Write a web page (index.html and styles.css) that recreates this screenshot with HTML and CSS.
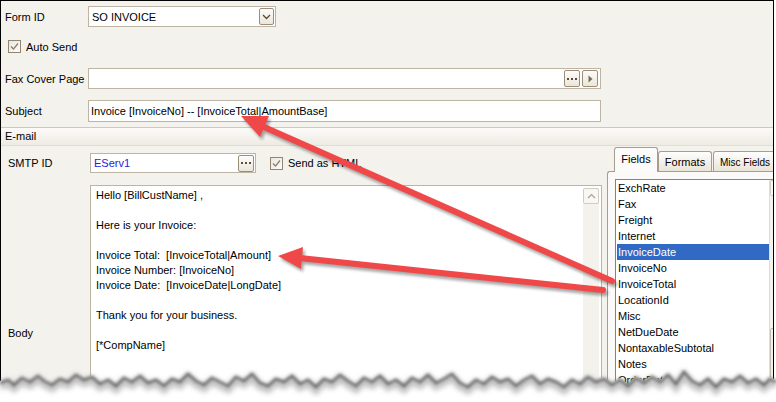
FILE: index.html
```html
<!DOCTYPE html>
<html lang="en">
<head>
    <meta charset="UTF-8">
    <meta name="viewport" content="width=device-width, initial-scale=1.0">
    <title>SO Invoice - E-mail</title>
    <link rel="stylesheet" href="styles.css">
</head>
<body>
    <div class="window">
        <div class="row row-form">
            <span class="label">Form ID</span>
            <div class="select">
                <span>SO INVOICE</span>
                <span class="btn btn-drop">
                    <svg width="9" height="6" viewBox="0 0 9 6"><path d="M1 1 L4.5 4.5 L8 1" fill="none" stroke="#5a4a36" stroke-width="1.3"/></svg>
                </span>
            </div>
        </div>
        <div class="row row-auto">
            <span class="check">
                <svg width="11" height="11" viewBox="0 0 11 11"><path d="M2 5.5 L4.5 8 L9 2.5" fill="none" stroke="#8a7e6c" stroke-width="1.2"/></svg>
            </span>
            <span>Auto Send</span>
        </div>
        <div class="row row-fax">
            <span class="label">Fax Cover Page</span>
            <div class="input wide">
                <span class="fill"></span>
                <span class="btn btn-dots"><i></i><i></i><i></i></span>
                <span class="btn btn-play">
                    <svg width="5" height="8" viewBox="0 0 5 8"><path d="M0.5 0.5 L4.5 4 L0.5 7.5 Z" fill="#7a6a55"/></svg>
                </span>
            </div>
        </div>
        <div class="row row-subject">
            <span class="label">Subject</span>
            <div class="input wide">Invoice [InvoiceNo] -- [InvoiceTotal|AmountBase]</div>
        </div>

        <div class="section-head">E-mail</div>

        <div class="email">
            <div class="email-main">
                <div class="row row-smtp">
                    <span class="label label-smtp">SMTP ID</span>
                    <div class="input smtp">
                        <span class="fill blue">EServ1</span>
                        <span class="btn btn-dots"><i></i><i></i><i></i></span>
                    </div>
                    <span class="check check-html">
                        <svg width="11" height="11" viewBox="0 0 11 11"><path d="M2 5.5 L4.5 8 L9 2.5" fill="none" stroke="#8a7e6c" stroke-width="1.2"/></svg>
                    </span>
                    <span>Send as HTML</span>
                </div>
                <div class="body-row">
                    <div class="label label-body">Body</div>
                    <div class="textarea">
                        <div class="text">
                            <p>Hello [BillCustName] ,</p>
                            <p></p>
                            <p>Here is your Invoice:</p>
                            <p></p>
                            <p>Invoice Total:  [InvoiceTotal|Amount]</p>
                            <p>Invoice Number: [InvoiceNo]</p>
                            <p>Invoice Date:  [InvoiceDate|LongDate]</p>
                            <p></p>
                            <p>Thank you for your business.</p>
                            <p></p>
                            <p>[*CompName]</p>
                        </div>
                        <div class="vscroll">
                            <span class="sbtn">
                                <svg width="9" height="6" viewBox="0 0 9 6"><path d="M1 5 L4.5 1.5 L8 5" fill="none" stroke="#a8a194" stroke-width="1.2"/></svg>
                            </span>
                        </div>
                    </div>
                </div>
            </div>

            <div class="side">
                <div class="tabs">
                    <span class="tab active">Fields</span>
                    <span class="tab t-formats">Formats</span>
                    <span class="tab t-misc">Misc Fields</span>
                </div>
                <div class="tab-panel">
                    <div class="listbox">
                        <ul class="fields">
                            <li>ExchRate</li>
                            <li>Fax</li>
                            <li>Freight</li>
                            <li>Internet</li>
                            <li class="selected">InvoiceDate</li>
                            <li>InvoiceNo</li>
                            <li>InvoiceTotal</li>
                            <li>LocationId</li>
                            <li>Misc</li>
                            <li>NetDueDate</li>
                            <li>NontaxableSubtotal</li>
                            <li>Notes</li>
                            <li>OrderDate</li>
                        </ul>
                        <div class="vscroll list-scroll">
                            <span class="sbtn"></span>
                            <span class="thumb"></span>
                        </div>
                    </div>
                </div>
            </div>
        </div>
    </div>

    <svg class="overlay" width="776" height="402" viewBox="0 0 776 402">
        <defs>
            <filter id="blur" x="-5%" y="-20%" width="110%" height="140%"><feGaussianBlur stdDeviation="1.6"/></filter>
            <filter id="soft" x="-5%" y="-50%" width="110%" height="200%"><feGaussianBlur stdDeviation="2.5"/></filter>
            <path id="edge" d="M0,381 L8,378 L14,383 L22,376 L30,380 L38,374 L44,379 L52,383 L60,377 L68,380 L76,373 L84,378 L92,375 L100,382 L108,378 L116,384 L124,376 L132,380 L140,374 L148,381 L156,378 L164,384 L172,377 L180,380 L188,372 L196,379 L204,383 L212,376 L220,380 L228,384 L236,375 L244,379 L252,372 L260,381 L268,384 L276,377 L284,380 L292,374 L300,382 L308,378 L316,385 L324,377 L332,380 L340,373 L348,379 L356,384 L364,376 L372,380 L380,374 L388,382 L396,378 L404,384 L412,376 L420,380 L428,373 L436,381 L444,377 L452,372 L460,381 L468,385 L476,378 L484,382 L492,375 L500,380 L508,377 L516,384 L524,378 L532,374 L540,382 L548,377 L556,380 L564,385 L572,378 L580,382 L588,375 L596,380 L604,377 L612,383 L620,378 L628,384 L636,376 L644,381 L652,375 L660,380 L668,373 L676,382 L684,370 L692,379 L700,383 L708,377 L716,385 L724,377 L732,380 L740,374 L748,381 L756,377 L764,383 L770,377 L776,380"/>
        </defs>
        <!-- arrow shadows -->
        <g transform="translate(2 3)" fill="#000" stroke="#000" opacity="0.35" filter="url(#blur)">
            <line x1="612" y1="281" x2="264" y2="127" stroke-width="6" stroke-linecap="round"/>
            <polygon points="241,116 260,137 269,116" stroke="none"/>
            <line x1="603" y1="290" x2="300" y2="258" stroke-width="6" stroke-linecap="round"/>
            <polygon points="278,256 301,269 303,247" stroke="none"/>
        </g>
        <!-- arrows -->
        <g fill="#f04848" stroke="#f04848">
            <line x1="612" y1="281" x2="264" y2="127" stroke-width="6" stroke-linecap="round"/>
            <polygon points="241,116 260,137 269,116" stroke="none"/>
            <line x1="603" y1="290" x2="300" y2="258" stroke-width="6" stroke-linecap="round"/>
            <polygon points="278,256 301,269 303,247" stroke="none"/>
        </g>
        <!-- torn bottom edge -->
        <rect x="0" y="372" width="776" height="30" fill="#fff" clip-path="url(#below)"/>
        <clipPath id="below">
            <path d="M0,381 L8,378 L14,383 L22,376 L30,380 L38,374 L44,379 L52,383 L60,377 L68,380 L76,373 L84,378 L92,375 L100,382 L108,378 L116,384 L124,376 L132,380 L140,374 L148,381 L156,378 L164,384 L172,377 L180,380 L188,372 L196,379 L204,383 L212,376 L220,380 L228,384 L236,375 L244,379 L252,372 L260,381 L268,384 L276,377 L284,380 L292,374 L300,382 L308,378 L316,385 L324,377 L332,380 L340,373 L348,379 L356,384 L364,376 L372,380 L380,374 L388,382 L396,378 L404,384 L412,376 L420,380 L428,373 L436,381 L444,377 L452,372 L460,381 L468,385 L476,378 L484,382 L492,375 L500,380 L508,377 L516,384 L524,378 L532,374 L540,382 L548,377 L556,380 L564,385 L572,378 L580,382 L588,375 L596,380 L604,377 L612,383 L620,378 L628,384 L636,376 L644,381 L652,375 L660,380 L668,373 L676,382 L684,370 L692,379 L700,383 L708,377 L716,385 L724,377 L732,380 L740,374 L748,381 L756,377 L764,383 L770,377 L776,380 L776,402 L0,402 Z"/>
        </clipPath>
        <use href="#edge" fill="none" stroke="#999" stroke-width="8" opacity="0.6" filter="url(#soft)" transform="translate(0 5)"/>
        <use href="#edge" fill="none" stroke="#555" stroke-width="2.5" opacity="0.85" filter="url(#blur)" transform="translate(0 2)"/>
    </svg>
</body>
</html>
```

FILE: styles.css
```css
* {
    margin: 0;
    padding: 0;
    box-sizing: border-box;
}
ul {
    list-style: none;
}
body {
    width: 776px;
    height: 402px;
    overflow: hidden;
    position: relative;
    background: #fff;
    font-family: "Liberation Sans", Arial, sans-serif;
    font-size: 11px;
    color: #000;
}
.window {
    width: 774px;
    height: 402px;
    border: 1px solid #000;
    border-bottom: none;
    background: #f4f2ed;
    overflow: hidden;
}
.row {
    display: flex;
    align-items: center;
}
.label {
    flex: none;
    width: 87px;
    padding-left: 4px;
}
.row-form {
    height: 31px;
}
.row-auto {
    height: 29px;
    padding-left: 7px;
}
.row-fax {
    height: 35px;
}
.row-subject {
    height: 29px;
}

/* inputs */
.select, .input {
    display: flex;
    align-items: center;
    border: 1px solid #bdb4a5;
    background: #fff;
    white-space: nowrap;
}
.select {
    width: 188px;
    height: 21px;
    padding: 0 1px 0 3px;
    justify-content: space-between;
}
.input.wide {
    width: 513px;
    height: 21px;
    padding: 0 2px 0 2px;
}
.row-subject .input.wide {
    height: 22px;
}
.fill {
    flex: 1;
}
.blue {
    color: #2323e6;
}
.btn {
    flex: none;
    display: flex;
    align-items: center;
    justify-content: center;
    width: 16px;
    height: 17px;
    border: 1px solid #9d8e7a;
    border-radius: 2px;
    background: linear-gradient(#fdfcfa, #ebe6da);
}
.btn-drop {
    width: 15px;
}
.btn-play {
    margin-left: 2px;
}
.btn-dots {
    gap: 2px;
}
.btn-dots i {
    width: 2px;
    height: 2px;
    background: #5c4c3a;
}

/* checkboxes */
.check {
    flex: none;
    display: flex;
    align-items: center;
    justify-content: center;
    width: 13px;
    height: 13px;
    margin-right: 5px;
    border: 1px solid #938571;
    background: linear-gradient(135deg, #e9e6df, #fdfdfc);
}

/* e-mail section */
.section-head {
    margin-top: 2px;
    height: 19px;
    line-height: 17px;
    padding-left: 4px;
    border-top: 1px solid #cfc8b9;
    border-bottom: 1px solid #e3ded3;
    background: linear-gradient(#fcfbf9, #eeebe3);
}
.email {
    display: flex;
}
.email-main {
    flex: none;
    width: 606px;
}
.row-smtp {
    margin-top: 7px;
    height: 20px;
}
.label-smtp {
    width: 89px;
    padding-left: 7px;
}
.input.smtp {
    width: 166px;
    height: 20px;
    padding: 0 1px 0 3px;
}
.check-html {
    margin-left: 14px;
}
.body-row {
    display: flex;
    margin-top: 12px;
}
.label-body {
    width: 89px;
    padding-left: 7px;
    padding-top: 141px;
    line-height: 14px;
}
.textarea {
    display: flex;
    width: 512px;
    height: 240px;
    border: 1px solid #bdb4a5;
    background: #fff;
}
.text {
    flex: 1;
    padding: 2px 0 0 5px;
}
.text p {
    height: 15px;
    line-height: 15px;
    white-space: pre;
}
.vscroll {
    flex: none;
    width: 16px;
    margin: 2px 2px 0 0;
    background: #f4f2ed;
}
.sbtn {
    display: flex;
    align-items: center;
    justify-content: center;
    width: 16px;
    height: 16px;
    border: 1px solid #d3cdc1;
    border-radius: 2px;
    background: #f8f7f3;
}

/* fields panel */
.side {
    flex: none;
    width: 180px;
    padding-top: 1px;
}
.tabs {
    display: flex;
    align-items: flex-end;
    height: 24px;
    padding-left: 7px;
}
.tab {
    flex: none;
    height: 20px;
    padding-top: 4px;
    text-align: center;
    white-space: nowrap;
    border: 1px solid #a69d8e;
    border-bottom: none;
    border-radius: 3px 3px 0 0;
    background: linear-gradient(#fefefd, #e9e4d8);
}
.tab.active {
    position: relative;
    z-index: 1;
    width: 44px;
    height: 25px;
    margin-bottom: -1px;
    padding-top: 5px;
    background: #fcfbf9;
}
.t-formats {
    width: 54px;
}
.t-misc {
    width: 62px;
    margin-left: 1px;
    text-align: left;
    padding-left: 6px;
    font-size: 10px;
    padding-top: 5px;
}
.tab-panel {
    height: 240px;
    padding: 7px 0 0 7px;
    border-top: 1px solid #a69d8e;
    border-left: 1px solid #a69d8e;
    border-top-left-radius: 3px;
    background: #fbfaf8;
}
.listbox {
    display: flex;
    width: 175px;
    height: 230px;
    border: 1px solid #828282;
    background: #fff;
}
.fields {
    flex: none;
    width: 153px;
    padding-left: 1px;
}
.fields li {
    height: 16px;
    line-height: 16px;
    padding-left: 1px;
    white-space: nowrap;
}
.fields li.selected {
    background: #316ac5;
    color: #fff;
}
.list-scroll {
    width: 17px;
    margin: 0;
    border-left: 1px solid #e2ded5;
    position: relative;
}
.list-scroll .thumb {
    position: absolute;
    left: 0;
    top: 148px;
    width: 16px;
    height: 60px;
    border: 1px solid #c4bcab;
    border-radius: 2px;
    background: #f1efe9;
}

.overlay {
    position: absolute;
    left: 0;
    top: 0;
    pointer-events: none;
}
```
